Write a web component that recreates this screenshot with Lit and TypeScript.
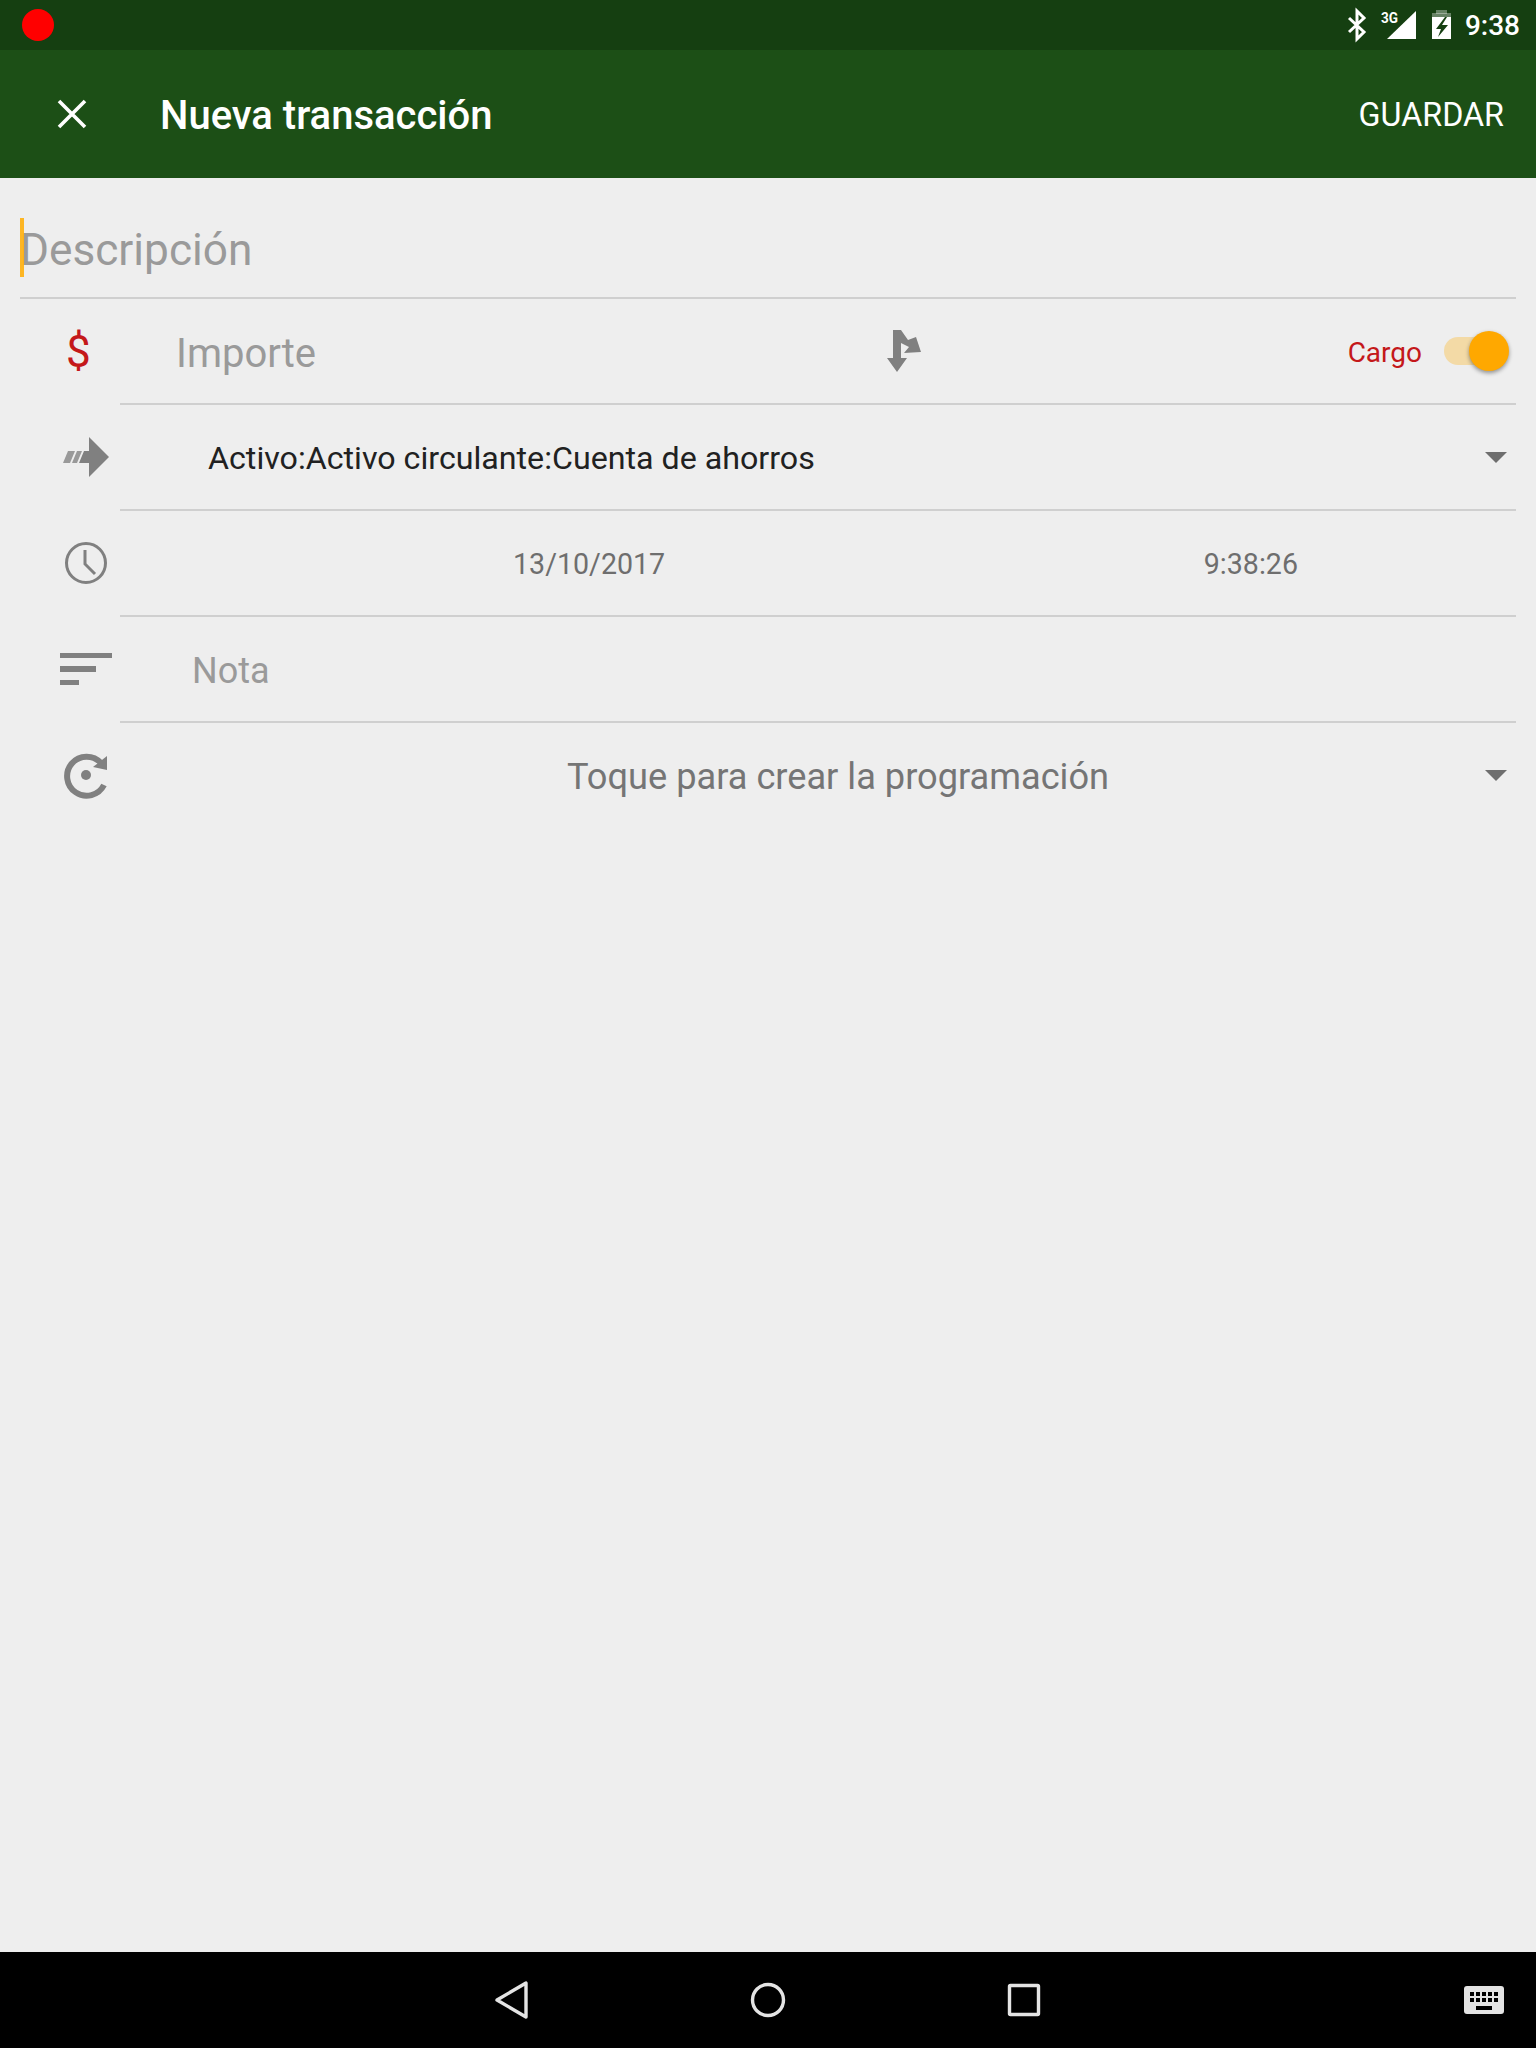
import {LitElement, html, css, svg} from 'lit';
import {customElement} from 'lit/decorators.js';

const GREY = '#808080';

// all row icons are drawn in a 120x106 cell, same coords as the row
const arrowIcon = svg`
  <polygon fill=${GREY} points="109,52 89,32 89,46 84,46 79,58 89,58 89,72"/>
  <polygon fill="#999" points="68,46 75,46 70,58 63,58"/>
  <polygon fill="#999" points="77,46 82,46 77,58 72,58"/>
`;

const clockIcon = svg`
  <circle cx="86" cy="52" r="19.5" fill="none" stroke=${GREY} stroke-width="3"/>
  <path d="M85 39V53L95 63" fill="none" stroke=${GREY} stroke-width="3"/>
`;

const sortIcon = svg`
  <rect x="60" y="36" width="52" height="5" fill=${GREY}/>
  <rect x="60" y="49" width="36" height="6" fill=${GREY}/>
  <rect x="60" y="63" width="19" height="5" fill=${GREY}/>
`;

const repeatIcon = svg`
  <path d="M104 62A19.5 19.5 0 1 1 101 40" fill="none" stroke=${GREY} stroke-width="6"/>
  <polygon fill=${GREY} points="107,33 107,47 93,44"/>
  <circle cx="86" cy="52" r="5" fill=${GREY}/>
`;

const caret = html`<svg class="caret" width="22" height="12" viewBox="0 0 22 12"><polygon points="0,0 22,0 11,11" fill="#6e6e6e"/></svg>`;

@customElement('app-root')
export class AppRoot extends LitElement {
  static styles = css`
    :host {
      display: flex;
      flex-direction: column;
      width: 1536px;
      height: 2048px;
      background: #eeeeee;
      font-family: Roboto, sans-serif;
      overflow: hidden;
    }

    .status {
      height: 50px;
      background: #153f11;
      display: flex;
      align-items: center;
      padding: 0 16px 0 22px;
      color: #fff;
      flex: none;
    }
    .rec {
      width: 32px;
      height: 32px;
      border-radius: 50%;
      background: #ff0000;
    }
    .status-icons {
      margin-left: auto;
      display: flex;
      align-items: center;
    }
    .clock-text {
      font-size: 28px;
      font-weight: 500;
      margin-left: 13px;
    }

    .appbar {
      height: 128px;
      background: #1c4f16;
      color: #fff;
      display: flex;
      align-items: center;
      flex: none;
    }
    .close {
      margin-left: 56px;
      flex: none;
    }
    .title {
      margin-left: 72px;
      padding-top: 3px;
      font-size: 40px;
      font-weight: 500;
    }
    .save {
      margin-left: auto;
      margin-right: 32px;
      padding-top: 1px;
      font-size: 32.3px;
    }

    .form {
      flex: 1;
    }
    .desc {
      height: 121px;
      margin: 0 20px;
      padding-top: 25px;
      border-bottom: 2px solid #cfcfcf;
      box-sizing: border-box;
      display: flex;
      align-items: center;
      font-size: 44.2px;
      color: #9a9a9a;
      position: relative;
    }
    .desc .cursor {
      position: absolute;
      left: 0;
      top: 40px;
      width: 4px;
      height: 59px;
      background: #ffab00;
      opacity: 0.85;
    }

    .row {
      height: 106px;
      display: flex;
    }
    .row > svg.icon {
      flex: none;
    }
    .dollar {
      flex: none;
      width: 120px;
      box-sizing: border-box;
      padding-left: 66px;
      line-height: 106px;
      font-size: 44px;
      color: #c4181a;
    }
    .cell {
      flex: 1;
      margin-right: 20px;
      border-bottom: 2px solid #cfcfcf;
      box-sizing: border-box;
      display: flex;
      align-items: center;
      min-width: 0;
    }
    .cell.last {
      border-bottom: none;
    }

    .amount {
      flex: none;
      width: 766px;
      box-sizing: border-box;
      padding: 5px 0 0 56px;
      font-size: 40px;
      color: #9a9a9a;
    }
    .branch {
      flex: none;
    }
    .cargo {
      margin-left: auto;
      padding-top: 2px;
      font-size: 28px;
      color: #c4181a;
    }
    .toggle {
      position: relative;
      width: 56px;
      height: 28px;
      border-radius: 14px;
      background: #f3daa6;
      margin-left: 22px;
      margin-right: 16px;
      flex: none;
    }
    .toggle .thumb {
      position: absolute;
      right: -9px;
      top: -6px;
      width: 40px;
      height: 40px;
      border-radius: 50%;
      background: #ffa800;
      box-shadow: 0 2px 4px rgba(0, 0, 0, 0.4);
    }

    .account {
      padding: 2px 0 0 88px;
      font-size: 32.2px;
      color: #212121;
    }
    .caret {
      margin-left: auto;
      margin-right: 9px;
      flex: none;
    }
    .datetime {
      justify-content: space-between;
      padding: 2px 218px 0 393px;
      font-size: 28.6px;
      color: #6e6e6e;
    }
    .note {
      padding: 4px 0 0 72px;
      font-size: 36px;
      color: #9a9a9a;
    }
    .schedule {
      padding: 0 0 0 447px;
      font-size: 36.2px;
      color: #757575;
    }

    .nav {
      height: 96px;
      background: #000;
      flex: none;
      display: flex;
      align-items: center;
    }
    .nav svg {
      flex: none;
    }
  `;

  render() {
    return html`
      <div class="status">
        <div class="rec"></div>
        <div class="status-icons">
          <svg width="112" height="50" viewBox="1340 0 112 50">
            <path d="M1349 18L1364 32L1357 39V11L1364 18L1349 32" fill="none" stroke="#fff" stroke-width="3"/>
            <text x="1381" y="23" font-family="Roboto" font-weight="700" font-size="15" fill="#fff" textLength="17" lengthAdjust="spacingAndGlyphs">3G</text>
            <polygon points="1416,11 1416,39 1387,39" fill="#fff"/>
            <rect x="1436" y="10" width="11" height="4" fill="#fff" fill-opacity="0.35"/>
            <rect x="1432" y="13" width="19" height="4" fill="#fff" fill-opacity="0.35"/>
            <path d="M1432 17H1451V39H1432Z" fill="#fff"/>
            <polygon points="1445,17 1436,29 1441,29 1438,37 1448,25 1442,25 1447,17" fill="#153f11"/>
          </svg>
          <span class="clock-text">9:38</span>
        </div>
      </div>

      <div class="appbar">
        <svg class="close" width="32" height="32" viewBox="0 0 32 32">
          <path d="M3 3L29 29M29 3L3 29" stroke="#fff" stroke-width="3.6"/>
        </svg>
        <span class="title">Nueva transacción</span>
        <span class="save">GUARDAR</span>
      </div>

      <div class="form">
        <div class="desc">
          <span class="cursor"></span>
          <span>Descripción</span>
        </div>

        <div class="row">
          <span class="dollar">$</span>
          <div class="cell">
            <span class="amount">Importe</span>
            <svg class="branch" width="36" height="44" viewBox="886 329 36 44">
              <polygon fill=${GREY} points="893,330 901,330 908,340 916,337 921,352 904,353 909,347 901,343 901,358 907,358 897,372 887,358 893,358"/>
            </svg>
            <span class="cargo">Cargo</span>
            <span class="toggle"><span class="thumb"></span></span>
          </div>
        </div>

        <div class="row">
          <svg class="icon" width="120" height="106" viewBox="0 0 120 106">${arrowIcon}</svg>
          <div class="cell account">
            Activo:Activo circulante:Cuenta de ahorros
            ${caret}
          </div>
        </div>

        <div class="row">
          <svg class="icon" width="120" height="106" viewBox="0 0 120 106">${clockIcon}</svg>
          <div class="cell datetime">
            <span>13/10/2017</span>
            <span>9:38:26</span>
          </div>
        </div>

        <div class="row">
          <svg class="icon" width="120" height="106" viewBox="0 0 120 106">${sortIcon}</svg>
          <div class="cell note">Nota</div>
        </div>

        <div class="row">
          <svg class="icon" width="120" height="106" viewBox="0 0 120 106">${repeatIcon}</svg>
          <div class="cell last schedule">
            Toque para crear la programación
            ${caret}
          </div>
        </div>
      </div>

      <div class="nav">
        <svg width="1536" height="96" viewBox="0 1952 1536 96">
          <polygon points="497,2000 526,1983 526,2017" fill="none" stroke="#e4e4e4" stroke-width="3.4" stroke-linejoin="round"/>
          <circle cx="768" cy="2000" r="15.5" fill="none" stroke="#e4e4e4" stroke-width="3.4"/>
          <rect x="1009.5" y="1985.5" width="29" height="29" rx="1" fill="none" stroke="#e4e4e4" stroke-width="3.4"/>
          <rect x="1464" y="1986" width="40" height="28" rx="3" fill="#e4e4e4"/>
          ${[0, 1, 2, 3, 4].map((i) => svg`
            <rect x=${1470 + i * 6} y="1992" width="4" height="4" fill="#000"/>
            <rect x=${1470 + i * 6} y="1998" width="4" height="4" fill="#000"/>
          `)}
          <rect x="1476" y="2006" width="16" height="4" fill="#000"/>
        </svg>
      </div>
    `;
  }
}
